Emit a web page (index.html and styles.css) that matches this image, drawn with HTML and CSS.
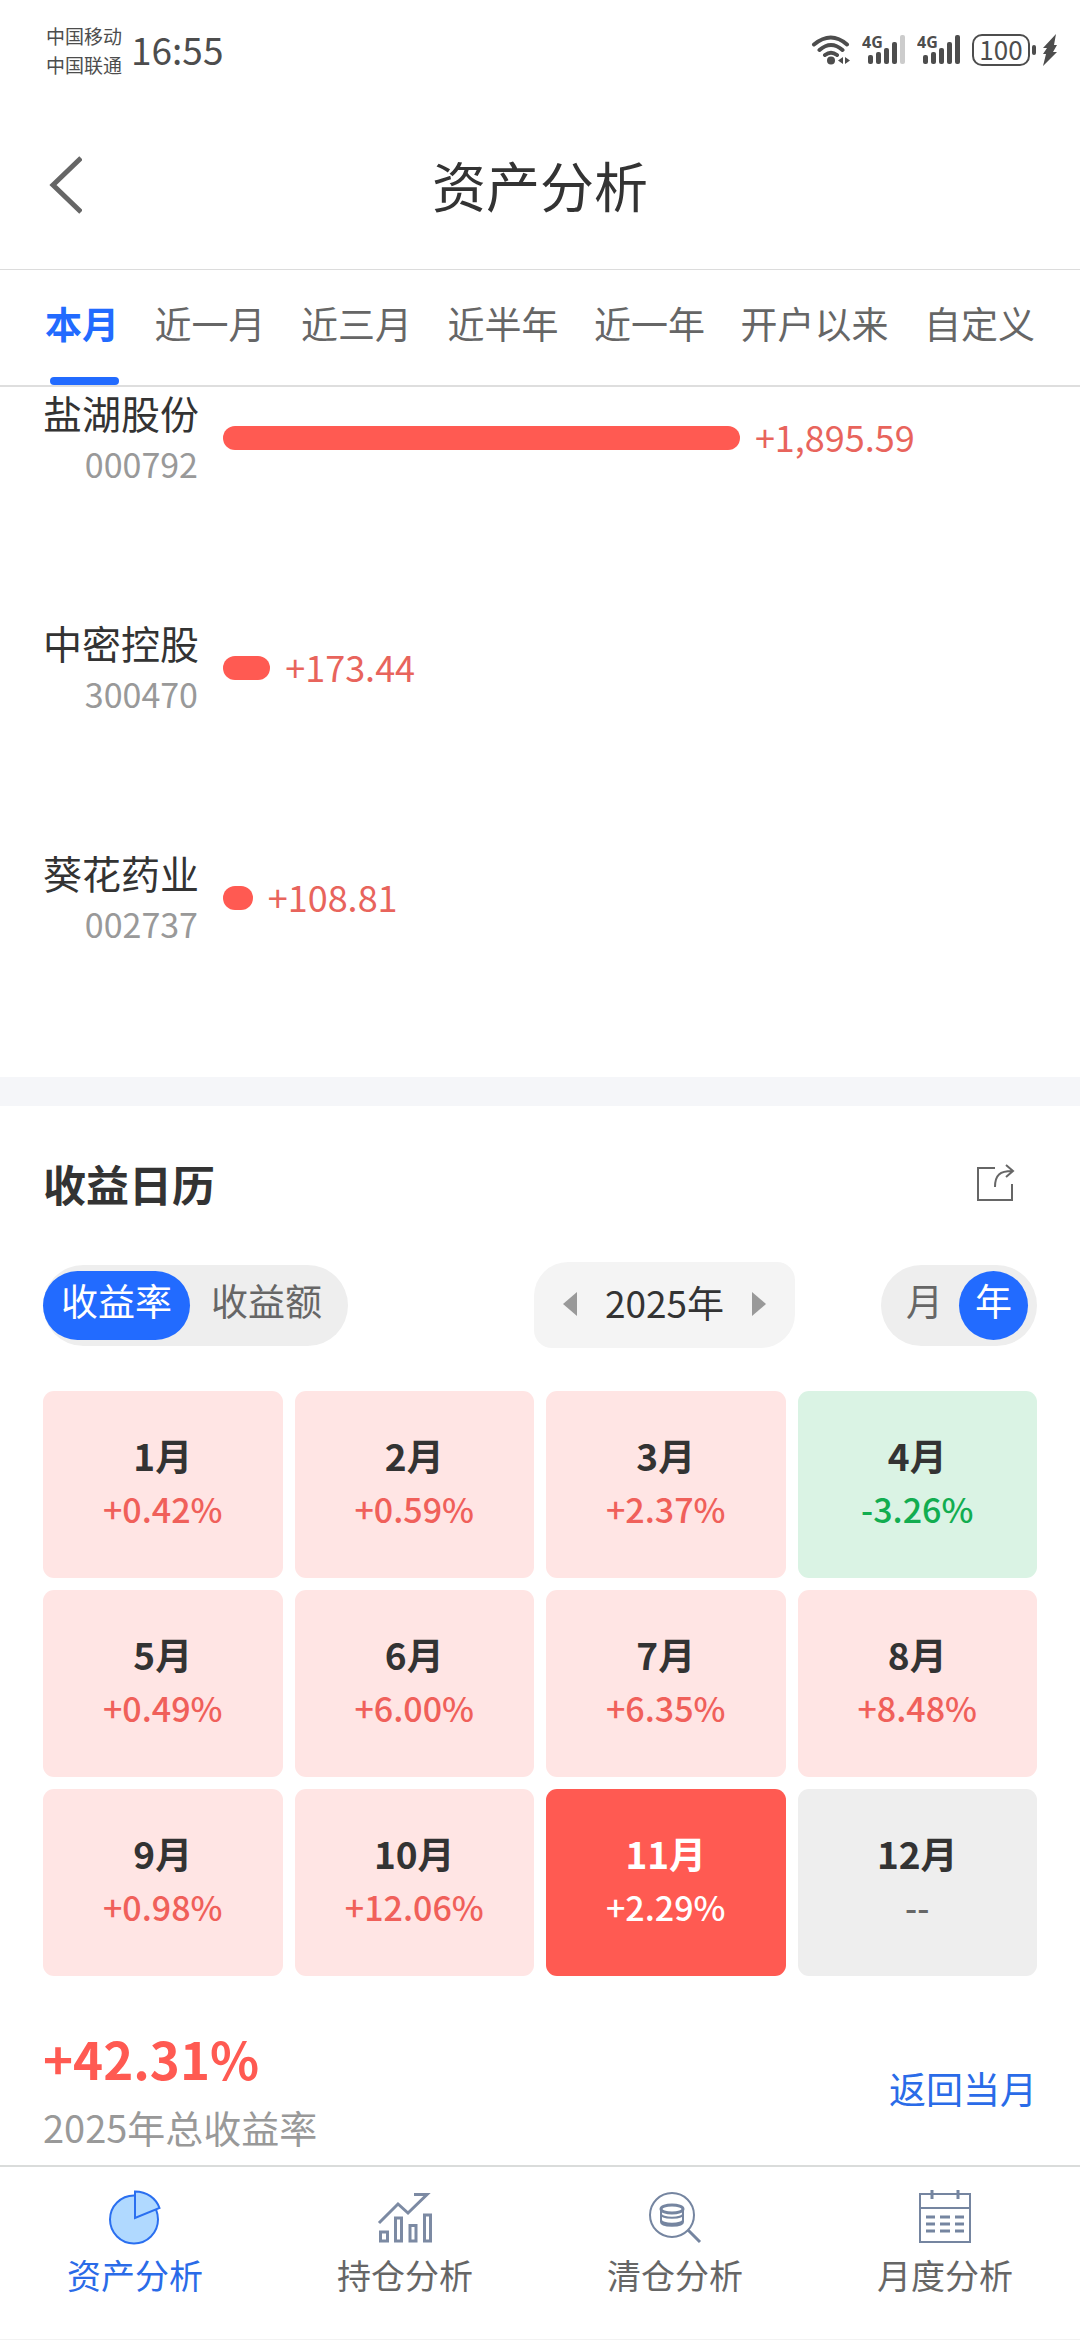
FILE: index.html
```html
<!DOCTYPE html>
<html lang="zh-CN">
<head>
<meta charset="utf-8">
<meta name="viewport" content="width=device-width, initial-scale=1">
<title>资产分析</title>
<link rel="stylesheet" href="styles.css">
</head>
<body>
<div class="app">
  <div class="status">
    <div class="carriers"><span>中国移动</span><span>中国联通</span></div>
    <span class="clock">16:55</span>
    <div class="status-icons">
      <svg class="wifi" width="40" height="32" viewBox="0 0 40 32" fill="none" stroke="#4d4d4d" stroke-width="4" stroke-linecap="round">
        <path d="M3 10.500Q20-3.500 36 10.500M8.500 16Q20 6 31.500 16M14 21Q20 16.500 26 21"/>
        <circle cx="20" cy="26.500" r="4" fill="#4d4d4d" stroke="none"/>
        <path d="M32 23v7l-5-3.500zM34 23v7l5-3.500z" fill="#4d4d4d" stroke="none"/>
      </svg>
      <svg class="signal" width="44" height="48" viewBox="0 -8 44 48" fill="#4d4d4d">
        <text class="gen" x="0" y="14">4G</text>
        <rect x="6" y="21" width="5" height="9" rx="2"/><rect x="14" y="18" width="5" height="12" rx="2"/><rect x="22" y="14" width="5" height="16" rx="2"/><rect x="30" y="8" width="5" height="22" rx="2"/><rect x="38" y="1" width="5" height="29" rx="2" fill="#ccc"/>
      </svg>
      <svg class="signal" width="44" height="48" viewBox="0 -8 44 48" fill="#4d4d4d">
        <text class="gen" x="0" y="14">4G</text>
        <rect x="6" y="21" width="5" height="9" rx="2"/><rect x="14" y="18" width="5" height="12" rx="2"/><rect x="22" y="14" width="5" height="16" rx="2"/><rect x="30" y="8" width="5" height="22" rx="2"/><rect x="38" y="1" width="5" height="29" rx="2"/>
      </svg>
      <span class="battery">100</span>
      <span class="nub"></span>
      <svg class="bolt" width="16" height="32" viewBox="0 0 16 32" fill="#4d4d4d"><path d="M14 0L1 14h4L1 20h3L1 32 15 18h-4l4-7h-3z"/></svg>
    </div>
  </div>

  <header class="header">
    <button class="back" type="button" aria-label="返回">
      <svg width="36" height="60" viewBox="0 0 36 60" fill="none" stroke="#666" stroke-width="5"><path d="M35 3L7 30l28 27"/></svg>
    </button>
    <h1>资产分析</h1>
  </header>

  <div class="tabs" role="tablist">
    <button class="tab active" type="button" role="tab" aria-selected="true">本月</button>
    <button class="tab" type="button" role="tab">近一月</button>
    <button class="tab" type="button" role="tab">近三月</button>
    <button class="tab" type="button" role="tab">近半年</button>
    <button class="tab" type="button" role="tab">近一年</button>
    <button class="tab" type="button" role="tab">开户以来</button>
    <button class="tab" type="button" role="tab">自定义</button>
  </div>

  <ul class="chart">
    <li class="stock"><div class="stock-id"><span class="name">盐湖股份</span><span class="code">000792</span></div><div class="plot"><span class="bar" style="width:63.5%"></span><span class="gain">+1,895.59</span></div></li>
    <li class="stock"><div class="stock-id"><span class="name">中密控股</span><span class="code">300470</span></div><div class="plot"><span class="bar" style="width:5.8%"></span><span class="gain">+173.44</span></div></li>
    <li class="stock"><div class="stock-id"><span class="name">葵花药业</span><span class="code">002737</span></div><div class="plot"><span class="bar" style="width:3.65%"></span><span class="gain">+108.81</span></div></li>
  </ul>

  <section class="calendar">
    <div class="calendar-head">
      <h2>收益日历</h2>
      <button class="share" type="button" aria-label="分享">
        <svg width="40" height="40" viewBox="0 0 40 40" fill="none" stroke="#666" stroke-width="2"><path d="M20 5H3v32h34V21"/><path d="M20 24C20 12 25 8 37 8M31 2l7 6-7 6"/></svg>
      </button>
    </div>
    <div class="toolbar">
      <div class="segment">
        <button class="seg rate on" type="button" aria-pressed="true">收益率</button>
        <button class="seg amount" type="button" aria-pressed="false">收益额</button>
      </div>
      <div class="year">
        <button class="arrow" type="button" aria-label="上一年"><svg width="14" height="24" viewBox="0 0 14 24" fill="#999"><path d="M14 0v24L0 12z"/></svg></button>
        <span>2025年</span>
        <button class="arrow" type="button" aria-label="下一年"><svg width="14" height="24" viewBox="0 0 14 24" fill="#999"><path d="M0 0v24l14-12z"/></svg></button>
      </div>
      <div class="segment unit">
        <button class="seg round" type="button" aria-pressed="false">月</button>
        <button class="seg round on" type="button" aria-pressed="true">年</button>
      </div>
    </div>
    <div class="months">
      <button class="month up" type="button"><b>1月</b><span>+0.42%</span></button>
      <button class="month up" type="button"><b>2月</b><span>+0.59%</span></button>
      <button class="month up" type="button"><b>3月</b><span>+2.37%</span></button>
      <button class="month down" type="button"><b>4月</b><span>-3.26%</span></button>
      <button class="month up" type="button"><b>5月</b><span>+0.49%</span></button>
      <button class="month up" type="button"><b>6月</b><span>+6.00%</span></button>
      <button class="month up" type="button"><b>7月</b><span>+6.35%</span></button>
      <button class="month up" type="button"><b>8月</b><span>+8.48%</span></button>
      <button class="month up" type="button"><b>9月</b><span>+0.98%</span></button>
      <button class="month up" type="button"><b>10月</b><span>+12.06%</span></button>
      <button class="month current" type="button"><b>11月</b><span>+2.29%</span></button>
      <button class="month" type="button"><b>12月</b><span>--</span></button>
    </div>
    <div class="total">
      <div class="total-text"><strong>+42.31%</strong><span>2025年总收益率</span></div>
      <button class="to-current" type="button">返回当月</button>
    </div>
  </section>

  <nav class="bottom">
    <a class="item selected" href="#assets">
      <svg width="56" height="56" viewBox="0 0 56 56" fill="#b0d9ff" stroke="#2a6ff0" stroke-width="2"><circle cx="27" cy="30.500" r="24"/><path d="M28 2.500V29L52.500 19C49 9.500 40 2.500 28 2.500z"/></svg>
      <span>资产分析</span>
    </a>
    <a class="item" href="#holdings">
      <svg width="56" height="56" viewBox="0 0 56 56" fill="none" stroke="#7c8aa3" stroke-width="3"><path d="M2 34L21 15l10 9L50 5.500H37"/><path d="M3.500 43h7v9h-7zM18.500 29h6v23h-6zM33 36.500h6V52h-6zM47.500 26h6v26h-6z"/></svg>
      <span>持仓分析</span>
    </a>
    <a class="item" href="#cleared">
      <svg width="56" height="56" viewBox="0 0 56 56" fill="none" stroke="#7585a0" stroke-width="3"><circle cx="25" cy="26" r="22" stroke-width="2"/><path d="M41 41l12 12"/><ellipse cx="25" cy="20" rx="11" ry="4"/><path d="M14 20v5c0 5 22 5 22 0v-5M14 25v6c0 5 22 5 22 0v-6M14 31v2c0 5 22 5 22 0v-2" stroke-width="2"/></svg>
      <span>清仓分析</span>
    </a>
    <a class="item" href="#monthly">
      <svg width="56" height="56" viewBox="0 0 56 56" fill="none" stroke="#7585a0" stroke-width="2"><path d="M3 5h50v48H3zM3 19h50"/><path d="M15 1v9M41 1v9" stroke-width="3"/><path d="M9 28h9M23 28h10M38 28h9M9 35h9M23 35h10M38 35h9M9 42h9M23 42h10M38 42h9" stroke-width="3"/></svg>
      <span>月度分析</span>
    </a>
  </nav>
</div>
</body>
</html>
```
FILE: styles.css
```css
* { box-sizing: border-box; }
body {
  margin: 0;
  background: #fff;
  color: #333;
  font-family: "Noto Sans CJK SC", sans-serif;
  font-size: 37px;
}
button {
  border: 0;
  padding: 0;
  background: none;
  color: inherit;
  font: inherit;
  cursor: pointer;
}
h1, h2, ul { margin: 0; padding: 0; }
svg { display: block; flex: none; }
.app { display: flex; flex-direction: column; min-height: 100vh; }

.status {
  display: flex;
  align-items: center;
  height: 100px;
  padding: 0 22px 0 46px;
  color: #4d4d4d;
}
.carriers { display: flex; flex-direction: column; font-size: 19px; line-height: 29px; }
.clock { margin-left: 9px; padding-bottom: 2px; font-size: 37px; line-height: 48px; }
.status-icons { display: flex; align-items: center; margin-left: auto; }
.signal { margin-left: 11px; }
.gen { font: bold 16px "Open Sans", sans-serif; }
.battery {
  width: 58px;
  height: 32px;
  margin-left: 11px;
  border: 2px solid #4d4d4d;
  border-radius: 10px;
  font-size: 26px;
  line-height: 26px;
  text-align: center;
}
.nub { width: 4px; height: 10px; margin-left: 2px; border-radius: 2px; background: #4d4d4d; }
.bolt { margin-left: 6px; }

.header {
  display: grid;
  grid-template-columns: 36px 1fr 36px;
  align-items: center;
  height: 170px;
  padding: 0 46px;
  border-bottom: 1px solid #dcdcdc;
}
.header h1 { font-size: 54px; font-weight: 400; line-height: 78px; text-align: center; }

.tabs {
  display: flex;
  justify-content: space-between;
  padding: 28px 45px 0;
  border-bottom: 2px solid #dedede;
  color: #666;
}
.tab { display: flex; flex-direction: column; gap: 29px; height: 87px; line-height: 50px; white-space: nowrap; }
.tab.active { color: #226bff; font-weight: 700; }
.tab.active::after {
  content: "";
  align-self: flex-end;
  width: 69px;
  height: 8px;
  border-radius: 4px;
  background: #226bff;
}

.chart {
  display: flex;
  flex-direction: column;
  gap: 128px;
  padding: 0 43px 128px;
  list-style: none;
}
.stock { display: flex; align-items: center; gap: 25px; }
.stock-id { display: flex; flex-direction: column; width: 155px; text-align: right; line-height: 51px; white-space: nowrap; }
.name { font-size: 39px; }
.code { color: #999; font-size: 34px; }
.plot { display: flex; flex: 1; align-items: center; gap: 15px; }
.bar { height: 24px; border-radius: 12px; background: #ff5a52; }
.gain { padding-bottom: 4px; color: #e8645c; font-size: 36px; line-height: 52px; }

.calendar { padding: 46px 43px 11px; border-top: 29px solid #f5f6f9; }
.calendar-head { display: flex; justify-content: space-between; align-items: center; }
.calendar-head h2 { font-size: 43px; line-height: 62px; }
.share { padding: 0 22px; }
.toolbar { display: flex; align-items: center; margin-top: 48px; }
.segment { display: flex; align-items: center; height: 81px; border-radius: 41px; background: #eee; }
.seg { height: 69px; border-radius: 35px; color: #666; line-height: 58px; padding-bottom: 10px; }
.rate { padding-left: 18px; padding-right: 18px; }
.amount { padding-left: 21px; padding-right: 26px; }
.round { width: 69px; }
.seg.on { background: #226bff; color: #fff; }
.unit { width: 156px; padding: 0 9px; }
.year {
  display: flex;
  align-items: center;
  justify-content: space-between;
  width: 261px;
  height: 86px;
  margin-left: auto;
  margin-right: 86px;
  padding: 0 29px 2px;
  border-radius: 34px 18px;
  background: #f4f4f4;
}
.year span { padding-bottom: 4px; line-height: 54px; }

.months { display: grid; grid-template-columns: repeat(4, 1fr); gap: 12px; margin-top: 43px; }
.month {
  display: flex;
  flex-direction: column;
  align-items: center;
  height: 187px;
  padding-top: 38px;
  border-radius: 11px;
  background: #eee;
  line-height: 53px;
}
.month span { color: #666; font-size: 34px; font-weight: 500; }
.month.up { background: #ffe5e4; }
.month.up span { color: #f0605a; }
.month.down { background: #daf3e4; }
.month.down span { color: #12ad50; }
.month.current { background: #ff5a52; color: #fff; }
.month.current span { color: #fff; }

.total { display: flex; justify-content: space-between; align-items: center; padding-top: 46px; }
.total-text { display: flex; flex-direction: column; gap: 6px; }
.total strong { color: #ff5a52; font-size: 51px; line-height: 72px; }
.total-text span { color: #999; font-size: 38px; line-height: 54px; }
.to-current { color: #2a6be8; line-height: 54px; }

.bottom {
  display: grid;
  grid-template-columns: repeat(4, 1fr);
  margin-top: auto;
  padding: 22px 0 40px;
  border-top: 2px solid #dadcdb;
  border-bottom: 1px solid #f2f2f2;
}
.item {
  display: flex;
  flex-direction: column;
  align-items: center;
  gap: 6px;
  color: #666;
  font-size: 34px;
  line-height: 48px;
  text-decoration: none;
}
.item.selected { color: #2a6be8; }
```
